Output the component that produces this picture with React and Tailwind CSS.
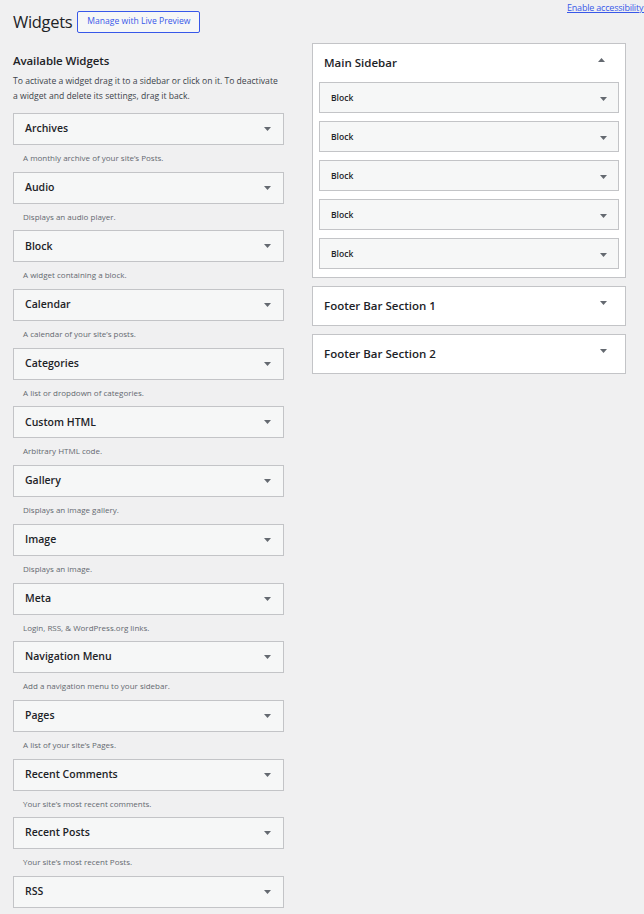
const widgets = [
  ['Archives', "A monthly archive of your site’s Posts."],
  ['Audio', 'Displays an audio player.'],
  ['Block', 'A widget containing a block.'],
  ['Calendar', 'A calendar of your site’s posts.'],
  ['Categories', 'A list or dropdown of categories.'],
  ['Custom HTML', 'Arbitrary HTML code.'],
  ['Gallery', 'Displays an image gallery.'],
  ['Image', 'Displays an image.'],
  ['Meta', 'Login, RSS, & WordPress.org links.'],
  ['Navigation Menu', 'Add a navigation menu to your sidebar.'],
  ['Pages', 'A list of your site’s Pages.'],
  ['Recent Comments', 'Your site’s most recent comments.'],
  ['Recent Posts', 'Your site’s most recent Posts.'],
  ['RSS', ''],
];

function Arrow({ up }) {
  return (
    <svg width="7" height="4" viewBox="0 0 7 4" className="shrink-0">
      <path d={up ? 'M0 4 L3.5 0 L7 4 Z' : 'M0 0 L7 0 L3.5 4 Z'} fill="#646970" />
    </svg>
  );
}

export default function App() {
  return (
    <div
      className="min-h-[914px] bg-[#f0f0f1] text-[#1d2327] relative overflow-hidden"
      style={{ fontFamily: '"Open Sans", "Noto Sans", sans-serif' }}
    >
      <a className="absolute top-[1px] left-[567px] text-[9px] leading-[14px] text-[#3858e9] underline whitespace-nowrap tracking-[-0.2px]">
        Enable accessibility mode
      </a>

      <div className="flex items-center gap-[5px] pl-[13px] pt-[10px]">
        <h1 className="text-[16.5px] leading-[23px] font-normal tracking-[-0.3px]">Widgets</h1>
        <button className="h-[22px] w-[123px] border border-[#3858e9] rounded-[2px] text-[8.6px] text-[#3858e9] bg-[#f6f7f7] whitespace-nowrap">
          Manage with Live Preview
        </button>
      </div>

      <div className="flex gap-[28px] pl-[13px]">
        <div className="w-[271px] shrink-0">
          <h2 className="text-[11.5px] font-semibold leading-[16px] mt-[20px] tracking-[-0.1px]">Available Widgets</h2>
          <p className="text-[8.6px] leading-[15px] mt-[5px] text-[#3c434a]">
            To activate a widget drag it to a sidebar or click on it. To deactivate a widget and delete its settings, drag it back.
          </p>
          <div className="mt-[9px] flex flex-col">
            {widgets.map(([name, desc]) => (
              <div key={name} className="h-[58.7px]">
                <div className="h-[32px] bg-[#f6f7f7] border border-[#c3c4c7] flex items-center justify-between pl-[11px] pr-[12px]">
                  <span className="text-[10.5px] font-semibold">{name}</span>
                  <Arrow />
                </div>
                <p className="text-[8px] text-[#646970] mt-[7px] pl-[10px] leading-[12px]">{desc}</p>
              </div>
            ))}
          </div>
        </div>

        <div className="w-[314px] shrink-0 pt-[10px] flex flex-col gap-[8px]">
          <div className="bg-white border border-[#c3c4c7] px-[6px] pb-[8px]">
            <div className="h-[38px] flex items-center justify-between pl-[5px] pr-[14px]">
              <span className="text-[11.5px] font-semibold">Main Sidebar</span>
              <span className="-mt-[6px]"><Arrow up /></span>
            </div>
            <div className="flex flex-col gap-[8px]">
              {[0, 1, 2, 3, 4].map((i) => (
                <div key={i} className="h-[31px] bg-[#f6f7f7] border border-[#c3c4c7] flex items-center justify-between pl-[11px] pr-[11px] pt-[2px]">
                  <span className="text-[8.5px] font-semibold">Block</span>
                  <Arrow />
                </div>
              ))}
            </div>
          </div>
          {['Footer Bar Section 1', 'Footer Bar Section 2'].map((t) => (
            <div key={t} className="h-[40px] bg-white border border-[#c3c4c7] flex items-center justify-between pl-[11px] pr-[18px]">
              <span className="text-[11.5px] font-semibold">{t}</span>
              <span className="-mt-[6px]"><Arrow /></span>
            </div>
          ))}
        </div>
      </div>
    </div>
  );
}
